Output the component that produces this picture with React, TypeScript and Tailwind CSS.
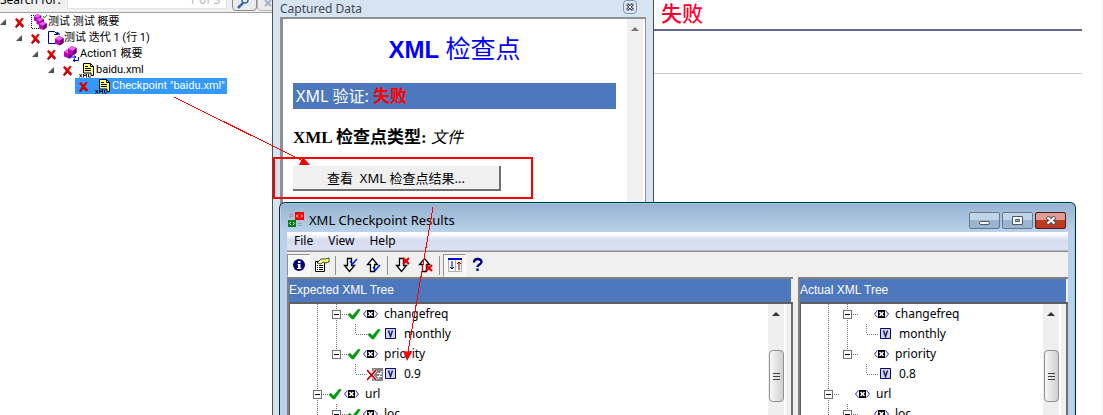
import type { ReactNode } from "react";

const UI = "font-['Noto_Sans','Noto_Sans_CJK_SC',sans-serif]";

function Cross({ className = "" }: { className?: string }) {
  return (
    <svg viewBox="0 0 11 11" className={`h-[11px] w-[11px] shrink-0 ${className}`} aria-hidden="true">
      <path d="M1 2.6 2.6 1 5.4 3.6 8 .8 9.8 1.6 7 5.3 10.3 8.9 8.6 10.4 5.4 7.3 3 10.4 1 9.8 3.8 5.8Z" fill="#d80000" />
      <path d="M1 9.8 3 10.4 5.4 7.3 8.6 10.4" fill="none" stroke="#7a0000" strokeWidth=".8" />
    </svg>
  );
}

function Cube({ x, y, s = 1 }: { x: number; y: number; s?: number }) {
  return (
    <g transform={`translate(${x} ${y}) scale(${s})`}>
      <path d="M0 3 4 0 9 2 9 7 5 10 0 8Z" fill="#c000c0" />
      <path d="M0 3 4 0 9 2 5 5Z" fill="#f060f0" />
      <path d="M5 5 9 2 9 7 5 10Z" fill="#600060" />
    </g>
  );
}

function SummaryIcon() {
  return (
    <svg viewBox="0 0 17 16" className="h-4 w-[17px] shrink-0" aria-hidden="true">
      <path d="M.5 1v14M2 1.5h7M1 14.5h9" stroke="#000" strokeDasharray="1 1" fill="none" shapeRendering="crispEdges" />
      <Cube x={3} y={0} s={0.8} />
      <Cube x={5.5} y={3.5} s={0.8} />
      <Cube x={8} y={7.5} s={0.85} />
      <path d="m12 2 1.5 2L16 1" stroke="#080" fill="none" />
    </svg>
  );
}

function IterationIcon() {
  return (
    <svg viewBox="0 0 17 16" className="h-4 w-[17px] shrink-0" aria-hidden="true">
      <path d="M9 13.5H1.5v-12h6l3 3" fill="#fff" stroke="#000080" />
      <path d="M7 4.5h3V2l3 2.500" stroke="#000080" fill="#000080" />
      <Cube x={8} y={6} s={0.95} />
    </svg>
  );
}

function ActionIcon() {
  return (
    <svg viewBox="0 0 17 16" className="h-4 w-[17px] shrink-0" aria-hidden="true">
      <Cube x={1} y={3} s={0.95} />
      <Cube x={5} y={0} s={0.95} />
      <path d="M7 12.5V11h5.500M11 9.500l2 1.500-2 1.500M15.500 11v3.500H10M12 13l-2 1.500 2 1.500" fill="none" stroke="#0000e0" />
    </svg>
  );
}

function XmlDocIcon() {
  return (
    <svg viewBox="0 0 17 16" className="h-4 w-[17px] shrink-0" aria-hidden="true">
      <path d="M4.500 11V1.500h7l3 3V13.500H12V11Z" fill="#ffff80" stroke="#000" />
      <path d="M11.500 1.500v3h3M6 4.500h3M6 6.500h6M6 8.500h6" fill="none" stroke="#000" />
      <path d="m.5 12 2.500 3.500M3 12 .5 15.500M4.500 15.500V12L6 14l1.500-2v3.500M9.500 12v3h2.500" fill="none" stroke="#000" strokeWidth=".9" />
    </svg>
  );
}

function ResultRow({ indent, icon, label, selected = false }: { indent: string; icon: ReactNode; label: string; selected?: boolean }) {
  return (
    <li className={`flex h-4 items-center font-[Roboto,'Noto_Sans_CJK_SC',sans-serif] ${indent}`}>
      {!selected && (
        <svg viewBox="0 0 11 8" className="h-2 w-[11px] shrink-0" aria-hidden="true">
          <path d="M6 1v6H0Z" fill="#505050" />
        </svg>
      )}
      <span className={`flex h-4 items-center whitespace-nowrap pl-[3px] text-[11px] leading-4 ${selected ? "bg-[#3399ff] pr-[2px] text-white" : "text-black"}`}>
        <Cross className="mr-[6px]" />
        {icon}
        {label}
      </span>
    </li>
  );
}

function ResultsTree() {
  return (
    <section className="w-[272px] shrink-0 overflow-hidden bg-white">
      <div className="flex h-[13px] items-end overflow-hidden border-b border-[#a0a0a0] bg-[#f0f0f0]">
        <label htmlFor="search" className="mb-1 w-[67px] shrink-0 text-[12px] leading-4">Search for:</label>
        <div className="mb-[3px] flex h-5 w-[160px] shrink-0 items-end border border-[#e0e4ea] bg-white">
          <input id="search" className="w-[121px] outline-none" />
          <span className="text-[12px] leading-4 text-[#b8b8b8]">1 of 3</span>
        </div>
        <button aria-label="Find" className="mb-px ml-[5px] h-5 w-[25px] shrink-0 rounded-b border border-[#8a8a8a] bg-[#ececec] pt-[5px] pl-1">
          <svg viewBox="0 0 14 12" className="h-3 w-[14px]" aria-hidden="true">
            <path d="m1 10 5-5" stroke="#3768b0" strokeWidth="2.500" />
            <circle cx="8" cy="2" r="3" fill="none" stroke="#3768b0" strokeWidth="1.500" />
          </svg>
        </button>
        <button aria-label="Clear" className="mb-px h-5 w-[20px] shrink-0 rounded-b border border-[#b8b8b8] bg-[#ececec] pt-[7px] pl-[5px]">
          <svg viewBox="0 0 10 10" className="h-[10px] w-[10px]" aria-hidden="true">
            <path d="m2 0 6 6M8 0 2 6" stroke="#a0b0c8" strokeWidth="2" />
          </svg>
        </button>
      </div>
      <ul className="pt-px">
        <ResultRow indent="pl-0" icon={<SummaryIcon />} label="测试 测试 概要" />
        <ResultRow indent="pl-4" icon={<IterationIcon />} label="测试 迭代 1 (行 1)" />
        <ResultRow indent="pl-8" icon={<ActionIcon />} label="Action1 概要" />
        <ResultRow indent="pl-12" icon={<XmlDocIcon />} label="baidu.xml" />
        <ResultRow indent="pl-[75px]" icon={<XmlDocIcon />} label={'Checkpoint "baidu.xml"'} selected />
      </ul>
    </section>
  );
}

function CapturedData() {
  return (
    <section className="flex w-[382px] shrink-0 flex-col border-x border-[#505050] bg-[#d6e3f1] px-[7px]">
      <header className="flex h-[17px] items-center justify-between overflow-hidden pr-[9px]">
        <h2 className="text-[12px] leading-4 text-[#404850]">Captured Data</h2>
        <button aria-label="Close pane" className="mb-1 flex h-[14px] w-[14px] items-center justify-center rounded-sm border border-[#8090b0] bg-[#dce7f4]">
          <svg viewBox="0 0 8 8" className="h-2 w-2" aria-hidden="true">
            <path d="m1 1 6 6M7 1 1 7" stroke="#404858" strokeWidth="3" />
            <path d="m1.500 1.500 5 5M6.500 1.500l-5 5" stroke="#fff" />
          </svg>
        </button>
      </header>
      <div className="flex flex-1 border-t-2 border-r border-l-[3px] border-[#909090] bg-white">
        <div className="flex-1 pr-[11px] pl-[10px]">
          <h1 className="mt-3 text-center font-['Liberation_Sans','Noto_Sans_CJK_SC',sans-serif] text-[24px] leading-9 font-bold text-[#0000ff]">
            XML <span className="text-[25px] font-normal">检查点</span>
          </h1>
          <p className="mt-[15px] h-[26px] bg-[#4d78bd] px-[3px] text-[16px] leading-[26px] text-white">
            XML 验证: <b className="text-[17px] text-[#ff0000]">失败</b>
          </p>
          <p className="mt-[17px] font-['Liberation_Serif','Noto_Sans_CJK_SC',serif] text-[17px] leading-6 text-black">
            <b>XML 检查点类型:</b> <i className="text-[16px]">文件</i>
          </p>
          <button className="mt-4 block h-[25px] w-[208px] border-r-2 border-b-2 border-[#707070] bg-[#f0f0f0] text-center text-[13px] leading-[22px] text-black">
            查看&nbsp; XML 检查点结果...
          </button>
        </div>
        <div className="flex w-[18px] justify-center border-r-2 border-white bg-[#f0f0f0] pt-2">
          <svg viewBox="0 0 8 4" className="h-1 w-2" aria-hidden="true"><path d="M0 4 4 0l4 4Z" fill="#777" /></svg>
        </div>
      </div>
    </section>
  );
}

function CheckIcon() {
  return (
    <svg viewBox="0 0 16 16" className="h-4 w-4 shrink-0" aria-hidden="true">
      <path d="M.8 8.500 3 7.200l2.500 2.600L11.300 3l2 .8L6.800 13H4.800Z" fill="#009a10" stroke="#009a10" strokeWidth=".5" />
    </svg>
  );
}

function MismatchIcon() {
  return (
    <svg viewBox="0 0 16 16" className="h-4 w-4 shrink-0" aria-hidden="true">
      <path d="M5 2h11v13H5z" fill="#848484" />
      <path d="M10 7.500h5M10 10.500h5M14.500 5l-3.500 8" stroke="#fff" />
      <path d="m0 4 9 10M9 4 0 14" stroke="#fff" strokeWidth="3" />
      <path d="m0 4 9 10M9 4 0 14" stroke="#c00000" strokeWidth="1.800" />
    </svg>
  );
}

function ElementIcon() {
  return (
    <svg viewBox="0 0 16 16" className="h-4 w-4 shrink-0" aria-hidden="true">
      <path d="M3.500 4.500 0.500 8l3 3.500M11.500 4.500l3 3.500-3 3.500" fill="none" stroke="#2020d0" />
      <path d="M4 4h7v8H4z" fill="#000" />
      <path d="m5.500 6 4 4M9.500 6l-4 4" stroke="#fff" strokeWidth="1.500" />
    </svg>
  );
}

function ValueIcon() {
  return (
    <svg viewBox="0 0 16 16" className="h-4 w-4 shrink-0" aria-hidden="true">
      <path d="M2.500 2.500h10v10h-10z" fill="#d4d8e4" stroke="#000080" />
      <path d="m5.500 4.500 2 6 2-6" fill="none" stroke="#202060" strokeWidth="1.500" />
    </svg>
  );
}

type Kind = "node" | "lastNode" | "leaf" | "lastLeaf" | "url";

const guides: Record<Kind, { width: string; lines: string; box?: number }> = {
  node: { width: "w-[57px]", lines: "M27.500 0v20M46.500 0v20M52 10.500h5", box: 42 },
  lastNode: { width: "w-[57px]", lines: "M27.500 0v20M46.500 0v10M52 10.500h5", box: 42 },
  leaf: { width: "w-[77px]", lines: "M27.500 0v20M46.500 0v20M65.500 0v10M66 10.500h11" },
  lastLeaf: { width: "w-[77px]", lines: "M27.500 0v20M65.500 0v10M66 10.500h11" },
  url: { width: "w-[38px]", lines: "M27.500 0v20M33 10.500h5", box: 23 },
};

function TreeRow({ kind, status, label }: { kind: Kind; status?: ReactNode; label: string }) {
  const { width, lines, box } = guides[kind];
  const leaf = kind === "leaf" || kind === "lastLeaf";
  return (
    <li className="flex h-5 items-center text-[12px] leading-5 text-black">
      <svg className={`h-5 shrink-0 ${width}`} shapeRendering="crispEdges" aria-hidden="true">
        <path d={lines} fill="none" stroke="#707070" strokeDasharray="1 1" />
        {box !== undefined && (
          <g transform={`translate(${box} 6)`}>
            <path d="M.5.5h8v8h-8z" fill="#fff" stroke="#707070" />
            <path d="M2 4.500h5" stroke="#000" />
          </g>
        )}
      </svg>
      {status ?? (leaf ? null : <span className="w-4 shrink-0" />)}
      {leaf ? <ValueIcon /> : <ElementIcon />}
      <span className="pl-[5px] whitespace-nowrap">{label}</span>
    </li>
  );
}

function TreePane({ title, className, children }: { title: string; className: string; children: ReactNode }) {
  return (
    <section className={`flex min-w-0 flex-col border-t-2 border-l-2 border-[#808080] ${className}`}>
      <h3 className="mr-[2px] h-[23px] shrink-0 bg-[#4d78bd] font-['Liberation_Sans_Narrow','Liberation_Sans',sans-serif] text-[12px] leading-[22px] whitespace-nowrap text-white">
        {title}
      </h3>
      <div className="flex min-h-0 flex-1 border-t-2 border-l border-[#606060] bg-white">
        <ul className="min-w-0 flex-1 overflow-hidden">{children}</ul>
        <div className="flex w-4 shrink-0 flex-col items-center bg-[#efefef] pt-2">
          <svg viewBox="0 0 8 4" className="h-1 w-2" aria-hidden="true"><path d="M0 4 4 0l4 4Z" fill="#333" /></svg>
          <div className="mt-[34px] flex h-[52px] w-[15px] shrink-0 flex-col items-center justify-center gap-[2px] rounded-sm border border-[#909090] bg-linear-to-r from-[#f8f8f8] to-[#cfcfcf]">
            <i className="h-px w-[7px] bg-[#404040]" />
            <i className="h-px w-[7px] bg-[#404040]" />
            <i className="h-px w-[7px] bg-[#404040]" />
          </div>
        </div>
        <div className="w-[9px] shrink-0 border-x-2 border-r-[#707070] border-l-white bg-[#f0f0f0]" />
      </div>
    </section>
  );
}

function ToolButton({ label, pressed = false, children }: { label: string; pressed?: boolean; children: ReactNode }) {
  return (
    <button
      aria-label={label}
      className={`flex h-[23px] w-[23px] shrink-0 items-center justify-center border ${pressed ? "border-t-[#909090] border-r-white border-b-white border-l-[#909090] bg-[#f8f8f8]" : "border-transparent"}`}
    >
      <svg viewBox="0 0 16 16" className="h-4 w-4" aria-hidden="true">{children}</svg>
    </button>
  );
}

function Separator() {
  return <span className="mr-[3px] ml-[2px] h-[19px] w-px bg-[#909090]" />;
}

const downArrow = "M4.500 1.500h4v7h3L6.500 14.500l-5-6h3Z";
const upArrow = "M4.500 14.500h4v-7h3L6.500 1.500l-5 6h3Z";

function Toolbar() {
  return (
    <div className="flex h-6 items-center bg-[#f0f0f0]">
      <ToolButton label="Information" pressed>
        <circle cx="8" cy="8" r="6" fill="#000080" />
        <path d="M7 4h2.500v2H7zM6.500 7h3v4h1v1H6v-1h1V8h-.5z" fill="#fff" />
      </ToolButton>
      <ToolButton label="Properties">
        <path d="M1.500 4.500h9v10h-9z" fill="#fff" stroke="#000" />
        <path d="M3 8.500h1M5 8.500h4M3 10.500h1M5 10.500h4M3 12.500h1M5 12.500h4" stroke="#000" />
        <path d="m3 6 4-4h4l4-1v4l-4 1-2-1-2 2Z" fill="#ffff80" stroke="#000" strokeWidth=".7" />
      </ToolButton>
      <Separator />
      <ToolButton label="Next check">
        <path d={downArrow} fill="#fff" stroke="#000" strokeWidth="1.300" />
        <path d="m7 4 2.500 3L14 2" fill="none" stroke="#0020f0" strokeWidth="1.500" />
      </ToolButton>
      <ToolButton label="Previous check">
        <path d={upArrow} fill="#fff" stroke="#000" strokeWidth="1.300" />
        <path d="m7 10 2.500 3L14 8" fill="none" stroke="#0020f0" strokeWidth="1.500" />
      </ToolButton>
      <Separator />
      <ToolButton label="Next mismatch">
        <path d={downArrow} fill="#fff" stroke="#000" strokeWidth="1.300" />
        <path d="m8 1 6 6M14 1 8 7" stroke="#e00000" strokeWidth="2.200" />
      </ToolButton>
      <ToolButton label="Previous mismatch">
        <path d={upArrow} fill="#fff" stroke="#000" strokeWidth="1.300" />
        <path d="m8 8 6 6M14 8l-6 6" stroke="#e00000" strokeWidth="2.200" />
      </ToolButton>
      <Separator />
      <ToolButton label="Scroll trees together" pressed>
        <path d="M1.500 2v12.500h13V2M8.500 3v11" fill="none" stroke="#b0b0b0" />
        <path d="M1 1h14v2H1z" fill="#0000e0" />
        <path d="M5 4v8M3 10l2 2 2-2" fill="none" stroke="#000080" />
        <path d="M12 13V5M10 7l2-2 2 2" fill="none" stroke="#800000" />
      </ToolButton>
      <ToolButton label="Help">
        <path d="M4 5.500C4 1 11.500 1 11.500 5c0 2.500-4 2.500-4 5" fill="none" stroke="#000080" strokeWidth="2.400" />
        <path d="M6.300 11.500h2.400v2.300H6.300z" fill="#000080" />
      </ToolButton>
    </div>
  );
}

const frameButton = "flex h-[17px] w-[31px] items-center justify-center rounded-[2px] border";

function ResultsWindow() {
  return (
    <div className="absolute top-[202px] right-[27px] bottom-0 left-[279px] flex flex-col overflow-hidden rounded-t-[6px] border border-b-0 border-[#202830] bg-[#b9d1ea] px-[7px] shadow-[inset_-1px_1px_0_#70dcf4]">
      <header className="-mx-[6px] mt-px flex h-7 shrink-0 items-center bg-linear-to-b from-[#98b4d1] to-[#b9d1ea] pt-1 pr-2 pl-[7px]">
        <svg viewBox="0 0 16 16" className="h-4 w-4 shrink-0" aria-hidden="true">
          <path d="M7 0h9v8H7z" fill="#f00000" />
          <path d="M0 8h8v7H0z" fill="#008010" />
          <path d="m10 2.500-1.500 1.500L10 5.500M13 2.500 14.500 4 13 5.500M3 10 1.500 11.500 3 13M5 10l1.500 1.500L5 13" fill="none" stroke="#fff" />
          <path d="M1 2.500h4M1 4.500h4M4 1 2 6M10 11.500h4M10 13.500h4" stroke="#a0a0a0" />
        </svg>
        <h2 className="flex-1 pl-[5px] text-[13px] leading-5 text-black">XML Checkpoint Results</h2>
        <div className="flex gap-[2px]">
          <button aria-label="Minimize" className={`${frameButton} border-[#66788f] bg-linear-to-b from-[#c2d5e8] from-50% to-[#9ab5cf] to-50%`}>
            <i className="mt-[5px] h-1 w-[11px] rounded-sm border border-[#505868] bg-white" />
          </button>
          <button aria-label="Maximize" className={`${frameButton} border-[#66788f] bg-linear-to-b from-[#c2d5e8] from-50% to-[#9ab5cf] to-50%`}>
            <svg viewBox="0 0 11 9" className="h-[9px] w-[11px]" aria-hidden="true">
              <path d="M.5.500h10v8H.5z" fill="#fff" stroke="#505868" />
              <path d="M3.500 3.500h4v2h-4z" fill="#9ab5cf" stroke="#505868" />
            </svg>
          </button>
          <button aria-label="Close" className={`${frameButton} border-[#501820] bg-linear-to-b from-[#e09c90] from-50% to-[#bd3a22] to-50%`}>
            <svg viewBox="0 0 12 9" className="h-[9px] w-3" aria-hidden="true">
              <path d="m2 1 8 7M10 1 2 8" stroke="#505060" strokeWidth="4" />
              <path d="m2.500 1.500 7 6M9.500 1.500l-7 6" stroke="#fff" strokeWidth="2.200" />
            </svg>
          </button>
        </div>
      </header>
      <nav className="flex h-[19px] shrink-0 items-center gap-[15px] border-b border-[#b0b4c8] bg-linear-to-b from-white from-10% via-[#d6dcef] via-45% to-[#dde2f3] px-[7px] text-[12px] leading-[18px] text-black">
        <button>File</button>
        <button>View</button>
        <button>Help</button>
      </nav>
      <div className="flex min-h-0 flex-1 flex-col border-t border-[#909090] bg-[#f0f0f0] pt-px">
        <Toolbar />
        <div className="flex min-h-0 flex-1 gap-[5px]">
          <TreePane title="Expected XML Tree" className="flex-1">
            <TreeRow kind="node" status={<CheckIcon />} label="changefreq" />
            <TreeRow kind="leaf" status={<CheckIcon />} label="monthly" />
            <TreeRow kind="lastNode" status={<CheckIcon />} label="priority" />
            <TreeRow kind="lastLeaf" status={<MismatchIcon />} label="0.9" />
            <TreeRow kind="url" status={<CheckIcon />} label="url" />
            <TreeRow kind="node" status={<CheckIcon />} label="loc" />
          </TreePane>
          <TreePane title="Actual XML Tree" className="w-[270px] shrink-0">
            <TreeRow kind="node" label="changefreq" />
            <TreeRow kind="leaf" label="monthly" />
            <TreeRow kind="lastNode" label="priority" />
            <TreeRow kind="lastLeaf" label="0.8" />
            <TreeRow kind="url" label="url" />
            <TreeRow kind="node" label="loc" />
          </TreePane>
        </div>
      </div>
    </div>
  );
}

export default function App() {
  return (
    <main className={`relative flex h-screen overflow-hidden bg-white ${UI}`}>
      <ResultsTree />
      <CapturedData />
      <section className="min-w-0 flex-1 border-r border-[#f0f0f0] pr-5">
        <h2 className="h-[31px] border-b-2 border-[#666699] pl-[7px] font-['Noto_Sans_CJK_SC',sans-serif] text-[21px] leading-6 font-medium text-[#ff0033]">失败</h2>
        <div className="h-[43px] border-b border-[#cccccc]" />
      </section>
      <ResultsWindow />
      <div className="pointer-events-none absolute top-[157px] left-[273px] h-[42px] w-[260px] border-2 border-[#ff0000]" />
      <svg className="pointer-events-none absolute inset-0 h-full w-full" aria-hidden="true">
        <path d="M174 97 303 161M433 207 408 352" stroke="#ff0000" fill="none" shapeRendering="crispEdges" />
        <path d="m303 157-4 8h11ZM403 351l9 1-5 9Z" fill="#ff0000" />
      </svg>
    </main>
  );
}
